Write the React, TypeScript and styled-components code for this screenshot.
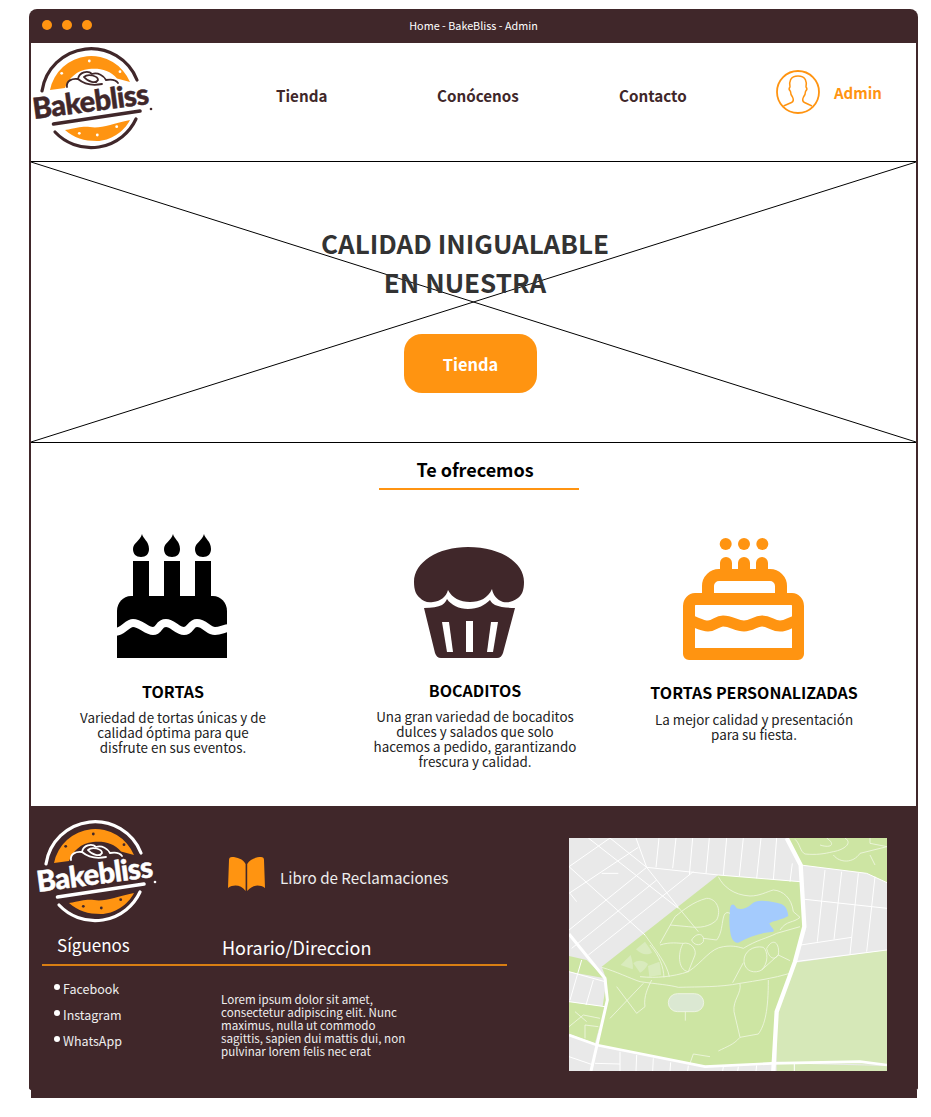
import React from 'react';
import styled, { createGlobalStyle } from 'styled-components';

const BROWN = '#40272a';
const ORANGE = '#ff9411';

const GlobalStyle = createGlobalStyle`
  * { box-sizing: border-box; }
  html, body { margin: 0; background: #fff; }
  body { font-family: "Noto Sans CJK SC", "Noto Sans", sans-serif; }
`;

const Logo = ({ inverted }: { inverted?: boolean }) => {
  const ink = inverted ? '#fff' : BROWN;
  const dot = inverted ? BROWN : '#fff';
  return (
    <LogoSvg viewBox="0 0 126 112">
      <g fill="none" stroke={ink} strokeLinecap="round">
        <path strokeWidth="3.2" d="M10 47 A49.5 49.5 0 0 1 105 36" />
        <path strokeWidth="3.2" d="M23 88 A49.5 49.5 0 0 0 104 75" />
      </g>
      <path fill={ORANGE} d="M18 46 A42 42 0 0 1 98 38 L85 34.5 C78 26 68 24 57 25 C45 26 37 34 33 44 Z" />
      <path fill={ORANGE} d="M33 86 C45 84 50 82 58 83 C68 85 80 80 98 76 C92 88 78 97 65 97 C52 97 42 94 33 86 Z" />
      <g fill={dot}>
        <circle cx="57.3" cy="17" r="1.4" />
        <circle cx="29.7" cy="29.3" r="1.4" />
        <circle cx="88" cy="27.7" r="1.4" />
        <circle cx="47.3" cy="89.3" r="1.4" />
        <circle cx="65.3" cy="91" r="1.4" />
        <circle cx="84.7" cy="82.7" r="1.4" />
      </g>
      <g fill="none" stroke={ink} strokeLinecap="round" strokeLinejoin="round">
        <path strokeWidth="1.8" d="M35 43 C34 37 40 34 46 35 C47 28 56 26 60 30 C66 28 72 32 74 36 C80 35 84 36 86 39" />
        <path strokeWidth="1.8" d="M52 33 C56 29 66 32 66 36 C64 40 56 38 52 33 M46 35 C52 40 60 42 70 40" />
      </g>
      <LogoText
        x="2"
        y="75"
        textLength="117"
        lengthAdjust="spacing"
        fill={ink}
        stroke={ink}
        strokeWidth="0.5"
        transform="rotate(-7.5 2 75)"
      >
        Bakebliss
      </LogoText>
      <circle cx="119" cy="65" r="1.3" fill={ink} />
      <path stroke={ink} strokeWidth="3.6" strokeLinecap="round" d="M21.5 80 L108 67" />
    </LogoSvg>
  );
};

const UserIcon = () => (
  <UserSvg viewBox="0 0 44 44" fill="none" stroke={ORANGE}>
    <circle cx="22" cy="22" r="21" strokeWidth="1.8" />
    <path
      strokeWidth="1.5"
      strokeLinejoin="round"
      d="M7.5 36 L15.5 32.5 C17.5 31.5 17.5 29 16.5 27 C15 25 14.5 23 14.5 21.5 C13 20 13 18 14 17 C13 12 14 6 22 6 C30 6 31 12 30 17 C31 18 31 20 29.5 21.5 C29.5 23 29 25 27.5 27 C26.5 29 26.5 31.5 28.5 32.5 L36 36"
    />
  </UserSvg>
);

const Flame = ({ x }: { x: number }) => (
  <path d={`M${x + 1} 534 C${x + 2} 539 ${x + 8} 541 ${x + 8} 549 C${x + 8} 554 ${x + 5} 557 ${x} 557 C${x - 5} 557 ${x - 8} 554 ${x - 8} 549 C${x - 8} 543 ${x - 1} 541 ${x + 1} 534 Z`} />
);

const BlackCake = () => (
  <OfferSvg viewBox="98 530 150 132">
    <g fill="#000">
      <Flame x={141} />
      <Flame x={172} />
      <Flame x={203} />
      <rect x="133" y="561" width="16" height="40" />
      <rect x="164" y="561" width="16" height="40" />
      <rect x="195" y="561" width="16" height="40" />
      <path d="M131 596 H213 C221 596 227 603 227 611 V658 H117 V611 C117 603 123 596 131 596 Z" />
    </g>
    <path
      fill="none"
      stroke="#fff"
      strokeWidth="8"
      d="M115 632 C123 632 127 623 133 623 C141 623 146 631 153 631 C160 631 158 623 166 623 C173 623 177 631 184 631 C191 631 190 623 197 623 C205 623 208 631 215 631 C221 631 224 628 229 628"
    />
  </OfferSvg>
);

const Muffin = () => (
  <OfferSvg viewBox="400 530 150 132">
    <path
      fill={BROWN}
      d="M414 582 C414 562 438 547 468 547 C500 547 524 562 524 582 C524 590 522 595 518 598 C512 602 508 603 503 602 C497 600 493 595 492 589 C488 598 480 602 470 602 C460 602 452 598 448 590 C446 597 441 601 433 602 C427 603 423 601 420 598 C416 595 414 590 414 582 Z"
    />
    <path
      fill={BROWN}
      d="M424 608 C432 608 438 607 442 605 C445 603 446 601 447 599 C451 605 459 609 468 609 C478 609 485 605 490 600 C491 602 493 604 495 605 C500 607 507 608 515 608 L503 653 C502 656 500 658 497 658 H441 C438 658 436 656 435 653 Z"
    />
    <g fill="#fff">
      <polygon points="442,622 449,622 453,652 447,652" />
      <polygon points="466,621 473,621 473,652 466,652" />
      <polygon points="491,622 498,622 493,652 487,652" />
    </g>
  </OfferSvg>
);

const OrangeCake = () => (
  <OfferSvg viewBox="679 530 150 132">
    <g fill={ORANGE}>
      <circle cx="725.7" cy="544" r="6" />
      <circle cx="744" cy="544" r="6" />
      <circle cx="762.3" cy="544" r="6" />
    </g>
    <g fill="none" stroke={ORANGE} strokeWidth="12" strokeLinejoin="round">
      <path strokeLinecap="round" d="M726 563 V572 M744 563 V572 M762 563 V572" />
      <path d="M708 595 V586 C708 580 713 575 719 575 H770 C776 575 781 580 781 586 V595" />
      <path d="M695 599 H792 C795 599 798 602 798 606 V654 H689 V606 C689 602 692 599 695 599 Z" />
      <path strokeWidth="11" d="M689 620 C698 623 702 626 708 626 C715 626 717 621 723 621 C732 621 736 626 744 626 C752 626 755 621 762 621 C770 621 772 626 780 626 C787 626 790 622 798 620" />
    </g>
  </OfferSvg>
);

const BookIcon = () => (
  <BookSvg viewBox="228 857 37 34" fill={ORANGE}>
    <path d="M245.6 864 C243 859 237 857 232 857 C230 857 229 858 229 860 L228 888 C234 884 241 885 245.6 891 Z" />
    <path d="M247.2 864 C250 859 256 857 261 857 C263 857 264 858 264 860 L265 888 C259 884 252 885 247.2 891 Z" />
  </BookSvg>
);

const MapPicture = () => (
  <MapSvg viewBox="27 24 954 699" preserveAspectRatio="none">
    <rect x="27" y="24" width="954" height="699" fill="#e9e9e9" />
    <g fill="#cde5a3">
      <polygon points="475,135 720,155 735,290 705,395 650,545 635,700 435,710 110,645 140,450 125,410" />
      <polygon points="680,24 981,24 981,158 920,130 722,105" />
      <polygon points="27,378 80,390 135,445 27,425" />
      <polygon points="27,515 135,530 105,640 27,612" />
    </g>
    <polygon fill="#d6e8b8" points="705,398 981,360 981,705 650,695 650,545" />
    <polygon fill="#d6e8b8" points="650,700 981,708 981,723 650,723" />
    <g fill="none" stroke="#fff" strokeWidth="3">
      <path d="M27 110 L150 24 M27 190 L235 52 M27 300 L260 112 M35 355 L290 150 M85 375 L400 125" />
      <path d="M85 24 L355 235 M27 110 L255 315 M30 190 L50 215 M150 24 L260 112 M228 24 L260 112 L355 232 M125 130 L175 130" />
      <path d="M260 112 L475 135 L720 155 M297 24 L288 112 M348 24 L338 115 M398 24 L388 135 M448 24 L438 130 M500 24 L490 135 M550 24 L538 138 M603 24 L590 145 M650 24 L640 150 M697 100 L690 155" />
      <path d="M722 105 L920 130 L981 158 M735 208 L981 235 M795 120 L772 335 M845 125 L822 328 M895 130 L870 372 M945 140 L920 365 M722 345 L875 322 M705 395 L981 360" />
      <path d="M27 425 L135 455 M27 515 L135 530 M65 390 L30 510 M100 450 L78 525" />
      <path d="M27 680 L100 705 M105 700 L180 702 M180 665 L180 723 M230 675 L228 723 M280 685 L278 723 M332 697 L330 723 M385 707 L383 723 M490 710 L488 723 M535 710 L533 723 M590 706 L588 723 M703 700 L703 723" />
    </g>
    <path fill="#a4cbfd" d="M510 235 C515 215 525 225 530 235 C545 240 560 235 575 222 C590 208 615 212 650 218 C675 222 682 235 685 258 C665 270 640 272 628 280 C632 292 645 298 640 305 C600 308 570 320 535 338 C518 340 512 320 510 300 C507 280 508 255 510 235 Z" />
    <path fill="#d9ebbd" d="M182 405 L212 375 C218 395 220 412 218 418 Z M228 358 L255 335 C262 345 272 358 276 368 C262 376 245 375 228 358 Z M220 400 C235 388 250 392 264 402 C258 415 248 425 240 428 Z M264 408 L298 395 C302 410 303 425 303 435 L268 440 Z" />
    <rect x="325" y="491" width="106" height="54" rx="27" fill="#dbe8d2" stroke="#f2f6e8" strokeWidth="2.5" />
    <g fill="none" stroke="#f1f7e4" strokeWidth="2.4">
      <path d="M475 140 C490 170 520 195 570 198 C600 198 620 185 640 180 C670 182 695 205 700 245 L720 262" />
      <path d="M125 412 C170 425 210 445 240 455 C290 462 330 465 355 472 C420 470 480 472 540 460 C590 452 640 445 690 430" />
      <path d="M255 315 C290 365 320 400 328 440 M270 345 C300 380 310 410 312 442 M300 340 L345 260 C370 240 400 215 440 205 C470 205 485 240 470 270 C450 290 420 295 385 290" />
      <path d="M355 232 L415 305 M330 285 L385 290 M370 340 C390 335 410 355 405 375 L385 425 C350 420 355 360 370 340 Z M395 330 C410 305 435 310 430 335 C420 350 400 345 395 330 Z" />
      <path d="M300 345 C330 335 355 340 370 340 M240 440 C290 445 340 440 385 425 C430 395 450 355 490 350 C520 345 540 352 550 355 C590 330 620 325 650 310 L720 290" />
      <path d="M552 395 C550 365 580 345 610 352 C625 365 625 400 605 420 C585 432 555 425 552 395 Z M620 355 C640 320 660 340 655 375 C640 395 625 380 620 355 Z M660 300 C680 270 700 280 720 262 M550 398 L518 458 M605 420 L655 375 L690 392" />
      <path d="M510 250 C480 235 495 300 470 330 L430 325" />
      <path d="M540 462 C545 490 518 510 522 545 L540 622 L595 612 C615 585 625 540 625 450 M540 622 C520 645 500 650 475 663 M400 672 L450 680 M390 700 L400 672" />
      <path d="M170 470 L230 550 L255 530 C250 500 265 470 275 450 M150 565 L250 460" />
      <path d="M376 545 V572" />
      <path d="M705 28 C720 40 720 65 735 72 C770 75 790 72 820 65 C850 60 880 40 855 24 M780 45 C810 55 830 45 800 24 M820 75 C840 100 880 100 900 70 L981 50 M930 75 L945 105 M930 24 L930 40 L981 50" />
      <path d="M27 590 L70 555 L120 565 M45 545 L80 575 M75 585 L75 625 M75 585 L115 590" />
    </g>
    <g fill="none" stroke="#fff">
      <path strokeWidth="13" d="M680 24 L722 105 L733 290 L705 395 L650 545 L640 723" />
      <path strokeWidth="9" d="M27 312 L135 445 L142 510 L93 723" />
      <path strokeWidth="8" d="M27 615 L110 645 L435 710 L635 700 L900 695 L981 705" />
    </g>
  </MapSvg>
);

const offers = [
  {
    key: 'tortas',
    icon: <BlackCake />,
    title: 'TORTAS',
    nudge: 0,
    text: ['Variedad de tortas únicas y de', 'calidad óptima para que', 'disfrute en sus eventos.'],
  },
  {
    key: 'bocaditos',
    icon: <Muffin />,
    title: 'BOCADITOS',
    nudge: -1,
    text: ['Una gran variedad de bocaditos', 'dulces y salados que solo', 'hacemos a pedido, garantizando', 'frescura y calidad.'],
  },
  {
    key: 'personalizadas',
    icon: <OrangeCake />,
    title: 'TORTAS PERSONALIZADAS',
    nudge: 1,
    text: ['La mejor calidad y presentación', 'para su fiesta.'],
  },
];

export default function App() {
  return (
    <>
      <GlobalStyle />
      <Frame>
        <TitleBar>
          <Dots>
            <Dot />
            <Dot />
            <Dot />
          </Dots>
          <WindowTitle>Home - BakeBliss - Admin</WindowTitle>
        </TitleBar>
        <Header>
          <Logo />
          <Nav>
            <NavLink>Tienda</NavLink>
            <NavLink>Conócenos</NavLink>
            <NavLink>Contacto</NavLink>
            <Account>
              <UserIcon />
              <AccountName>Admin</AccountName>
            </Account>
          </Nav>
        </Header>
        <Hero>
          <CrossLines viewBox="0 0 885 280" preserveAspectRatio="none">
            <line x1="0" y1="0" x2="885" y2="280" stroke="#000" strokeWidth="1" />
            <line x1="885" y1="0" x2="0" y2="280" stroke="#000" strokeWidth="1" />
          </CrossLines>
          <HeroTitle>
            CALIDAD INIGUALABLE
            <br />
            EN NUESTRA
          </HeroTitle>
          <ShopButton>Tienda</ShopButton>
        </Hero>
        <Offers>
          <OffersHeading>
            <OffersHeadingText>Te ofrecemos</OffersHeadingText>
          </OffersHeading>
          <OfferGrid>
            {offers.map((o) => (
              <Offer key={o.key}>
                {o.icon}
                <OfferTitle $nudge={o.nudge}>{o.title}</OfferTitle>
                <OfferText $nudge={o.nudge}>
                  {o.text.map((line) => (
                    <span key={line}>{line}</span>
                  ))}
                </OfferText>
              </Offer>
            ))}
          </OfferGrid>
        </Offers>
        <Footer>
          <FooterMain>
            <FooterTop>
              <Logo inverted />
              <Claims>
                <BookIcon />
                <ClaimsLabel>Libro de Reclamaciones</ClaimsLabel>
              </Claims>
            </FooterTop>
            <FooterHeadings>
              <FollowHeading>Síguenos</FollowHeading>
              <HoursHeading>Horario/Direccion</HoursHeading>
            </FooterHeadings>
            <FooterColumns>
              <SocialList>
                <SocialItem>Facebook</SocialItem>
                <SocialItem>Instagram</SocialItem>
                <SocialItem>WhatsApp</SocialItem>
              </SocialList>
              <Address>
                Lorem ipsum dolor sit amet,
                <br />
                consectetur adipiscing elit. Nunc
                <br />
                maximus, nulla ut commodo
                <br />
                sagittis, sapien dui mattis dui, non
                <br />
                pulvinar lorem felis nec erat
              </Address>
            </FooterColumns>
          </FooterMain>
          <MapPicture />
        </Footer>
      </Frame>
      <FrameTail />
    </>
  );
}

const Frame = styled.div`
  width: 889px;
  margin: 9px 0 0 29px;
  padding: 0 2px;
  background: ${BROWN};
  border-radius: 8px 8px 3px 3px;
  display: flex;
  flex-direction: column;
`;

const FrameTail = styled.div`
  width: 886px;
  height: 8px;
  margin-left: 31px;
  background: ${BROWN};
`;

const TitleBar = styled.div`
  position: relative;
  height: 34px;
  flex-shrink: 0;
  display: flex;
  align-items: center;
  justify-content: center;
`;

const Dots = styled.div`
  position: absolute;
  left: 11px;
  top: 11px;
  display: flex;
  gap: 10px;
`;

const Dot = styled.span`
  width: 10px;
  height: 10px;
  border-radius: 50%;
  background: ${ORANGE};
`;

const WindowTitle = styled.span`
  color: #fff;
  font-size: 10.8px;
  margin-top: -3px;
`;

const Header = styled.header`
  height: 119px;
  flex-shrink: 0;
  background: #fff;
  display: flex;
  align-items: flex-start;
  padding: 1px 0 0 1px;
  border-bottom: 1px solid #000;
`;

const LogoSvg = styled.svg`
  width: 126px;
  height: 112px;
  flex-shrink: 0;
`;

const LogoText = styled.text`
  font-family: "Lato", sans-serif;
  font-weight: 900;
  font-size: 29px;
`;

const Nav = styled.nav`
  display: grid;
  grid-template-columns: 161px 182px 157px auto;
  align-items: center;
  margin: 32px 0 0 118px;
`;

const NavLink = styled.a`
  color: ${BROWN};
  font-size: 15.2px;
  font-weight: 700;
`;

const Account = styled.div`
  display: flex;
  align-items: center;
  gap: 14px;
  margin-top: -6px;
`;

const UserSvg = styled.svg`
  width: 44px;
  height: 44px;
`;

const AccountName = styled.span`
  color: ${ORANGE};
  font-size: 15px;
  font-weight: 700;
`;

const Hero = styled.section`
  position: relative;
  height: 281px;
  flex-shrink: 0;
  background: #fff;
  border-bottom: 1px solid #000;
  display: flex;
  flex-direction: column;
  align-items: center;
  padding: 61px 0 0 0;
`;

const CrossLines = styled.svg`
  position: absolute;
  inset: 0;
  width: 100%;
  height: 100%;
`;

const HeroTitle = styled.h1`
  position: relative;
  margin: 0 0 0 -17px;
  color: #333;
  font-size: 26px;
  font-weight: 700;
  line-height: 39px;
  text-align: center;
`;

const ShopButton = styled.button`
  position: relative;
  width: 133px;
  height: 59px;
  margin: 33px 0 0 -6px;
  border: none;
  border-radius: 18px;
  background: ${ORANGE};
  color: #fff;
  font-family: inherit;
  font-size: 16.4px;
  font-weight: 700;
`;

const Offers = styled.section`
  height: 363px;
  flex-shrink: 0;
  background: #fff;
  display: flex;
  flex-direction: column;
  padding-top: 13px;
`;

const OffersHeading = styled.h2`
  width: 200px;
  margin: 0 0 0 348px;
  padding: 0 8px 6px 0;
  border-bottom: 2px solid ${ORANGE};
  color: #000;
  font-size: 18px;
  font-weight: 700;
  line-height: 26px;
  text-align: center;
`;

const OffersHeadingText = styled.span`
  white-space: nowrap;
`;

const OfferGrid = styled.div`
  display: grid;
  grid-template-columns: 284px 320px 238px;
  margin-top: 40px;
`;

const Offer = styled.article`
  display: flex;
  flex-direction: column;
  align-items: center;
`;

const OfferSvg = styled.svg`
  width: 150px;
  height: 132px;
`;

const OfferTitle = styled.h3<{ $nudge: number }>`
  margin: ${({ $nudge }) => 17 + $nudge}px 0 0;
  color: #000;
  font-size: 16px;
  font-weight: 700;
  line-height: 24px;
  white-space: nowrap;
`;

const OfferText = styled.p<{ $nudge: number }>`
  margin: ${({ $nudge }) => ($nudge > 0 ? 8 : 7)}px 0 0;
  display: flex;
  flex-direction: column;
  align-items: center;
  color: #222;
  font-size: 13.4px;
  line-height: 15px;
  white-space: nowrap;
`;

const Footer = styled.footer`
  height: 284px;
  flex-shrink: 0;
  margin: 0 -2px;
  background: ${BROWN};
  border-radius: 0 0 3px 3px;
  display: flex;
  align-items: flex-start;
  padding: 0 31px 0 13px;
`;

const FooterMain = styled.div`
  width: 465px;
  flex-shrink: 0;
  display: flex;
  flex-direction: column;
`;

const FooterTop = styled.div`
  height: 127px;
  display: flex;
  align-items: flex-start;
  padding-top: 11px;
  margin-left: -6px;
`;

const Claims = styled.div`
  display: flex;
  align-items: center;
  gap: 15px;
  margin: 40px 0 0 66px;
`;

const BookSvg = styled.svg`
  width: 37px;
  height: 34px;
`;

const ClaimsLabel = styled.span`
  color: #eee;
  font-size: 15.2px;
  margin-top: 5px;
`;

const FooterHeadings = styled.div`
  height: 33px;
  display: flex;
  align-items: flex-start;
  border-bottom: 2px solid #d87e13;
`;

const FollowHeading = styled.h4`
  width: 180px;
  margin: 0;
  padding-left: 15px;
  color: #fff;
  font-size: 17px;
  font-weight: 400;
  line-height: 24px;
`;

const HoursHeading = styled.h4`
  margin: 1px 0 0;
  color: #fff;
  font-size: 18px;
  font-weight: 400;
  line-height: 26px;
`;

const FooterColumns = styled.div`
  display: flex;
  align-items: flex-start;
  padding-top: 12px;
`;

const SocialList = styled.ul`
  width: 179px;
  margin: 0;
  padding: 0 0 0 12px;
  list-style: none;
  display: flex;
  flex-direction: column;
  gap: 5px;
`;

const SocialItem = styled.li`
  display: flex;
  align-items: center;
  gap: 3px;
  color: #eee;
  font-size: 12.5px;
  line-height: 21px;

  &::before {
    content: '';
    width: 6px;
    height: 6px;
    border-radius: 50%;
    background: #fff;
    margin-top: -3px;
  }
`;

const Address = styled.p`
  margin: 15px 0 0;
  color: #eee;
  font-size: 11.6px;
  line-height: 13px;
  white-space: nowrap;
`;

const MapSvg = styled.svg`
  width: 318px;
  height: 233px;
  margin: 32px 0 0 62px;
  flex-shrink: 0;
`;
